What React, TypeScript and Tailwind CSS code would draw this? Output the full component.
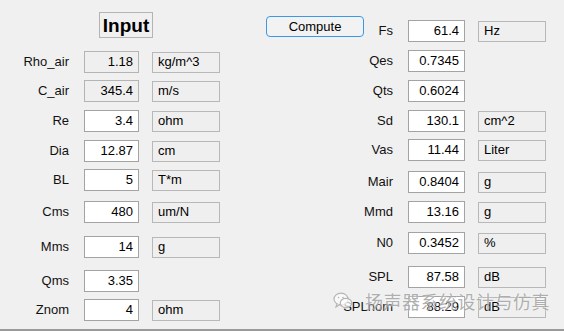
import React from "react";

// ─── Field data ───────────────────────────────────────────────────────────────

type Field = {
  label: string;
  value: string;
  unit?: string;
  disabled?: boolean;
  gap: string; // space above the row
};

const INPUTS: Field[] = [
  { label: "Rho_air", value: "1.18",  unit: "kg/m^3", disabled: true, gap: "mt-[13px]" },
  { label: "C_air",   value: "345.4", unit: "m/s",    disabled: true, gap: "mt-[7px]" },
  { label: "Re",      value: "3.4",   unit: "ohm",                    gap: "mt-[8px]" },
  { label: "Dia",     value: "12.87", unit: "cm",                     gap: "mt-[8px]" },
  { label: "BL",      value: "5",     unit: "T*m",                    gap: "mt-[7px]" },
  { label: "Cms",     value: "480",   unit: "um/N",                   gap: "mt-[10px]" },
  { label: "Mms",     value: "14",    unit: "g",                      gap: "mt-[13px]" },
  { label: "Qms",     value: "3.35",                                  gap: "mt-[12px]" },
  { label: "Znom",    value: "4",     unit: "ohm",                    gap: "mt-[7px]" },
];

const OUTPUTS: Field[] = [
  { label: "Fs",     value: "61.4",   unit: "Hz",    gap: "mt-[20px]" },
  { label: "Qes",    value: "0.7345",                gap: "mt-[8px]" },
  { label: "Qts",    value: "0.6024",                gap: "mt-[8px]" },
  { label: "Sd",     value: "130.1",  unit: "cm^2",  gap: "mt-[8px]" },
  { label: "Vas",    value: "11.44",  unit: "Liter", gap: "mt-[7px]" },
  { label: "Mair",   value: "0.8404", unit: "g",     gap: "mt-[10px]" },
  { label: "Mmd",    value: "13.16",  unit: "g",     gap: "mt-[8px]" },
  { label: "N0",     value: "0.3452", unit: "%",     gap: "mt-[9px]" },
  { label: "SPL",    value: "87.58",  unit: "dB",    gap: "mt-[12px]" },
  { label: "SPLnom", value: "88.29",  unit: "dB",    gap: "mt-[8px]" },
];

// ─── Row ──────────────────────────────────────────────────────────────────────

function Row({ f, labelW, valueW }: { f: Field; labelW: string; valueW: string }) {
  return (
    <div className={`flex items-center h-[22px] ${f.gap}`}>
      <div className={`${labelW} text-right text-[13px] text-[#111] leading-none pb-[1px]`}>{f.label}</div>
      <div
        className={`${valueW} ml-[15px] h-[22px] flex items-center justify-end pr-[5px] text-[13px] text-black border ${
          f.disabled ? "bg-[#efefef] border-[#b4b4b4]" : "bg-white border-[#a3a3a3]"
        }`}
      >
        {f.value}
      </div>
      {f.unit && (
        <div className="w-[68px] ml-[13px] h-[21px] flex items-center pl-[5px] text-[13px] text-black bg-[#efefef] border border-[#b8b8b8]">
          {f.unit}
        </div>
      )}
    </div>
  );
}

// ─── App ──────────────────────────────────────────────────────────────────────

export default function App() {
  return (
    <div
      className="relative w-[564px] h-[331px] overflow-hidden bg-[#f0f0f0] border-b-2 border-[#9a9a9a] flex"
      style={{ fontFamily: '"Liberation Sans", Arial, sans-serif' }}
    >
      {/* ── Inputs ───────────────────────────────────── */}
      <div className="w-[232px] flex flex-col">
        <div className="ml-[99px] mt-[12px] w-[54px] h-[26px] border border-[#b4b4b4] flex items-center justify-center text-[19px] font-bold text-black leading-none">
          Input
        </div>
        {INPUTS.map((f) => (
          <Row key={f.label} f={f} labelW="w-[69px]" valueW="w-[55px]" />
        ))}
      </div>

      {/* ── Compute button ───────────────────────────── */}
      <div className="ml-[34px] mt-[14px]">
        <button className="w-[98px] h-[21px] rounded-[4px] border border-[#3a98e8] bg-[#f2f2f2] text-[13px] text-black leading-none">
          Compute
        </button>
      </div>

      {/* ── Outputs ──────────────────────────────────── */}
      <div className="ml-[-31px] flex flex-col">
        {OUTPUTS.map((f) => (
          <Row key={f.label} f={f} labelW="w-[60px]" valueW="w-[57px]" />
        ))}
      </div>

      {/* ── Watermark ────────────────────────────────── */}
      <div className="absolute left-[333px] top-[292px] flex items-center gap-[12px] pointer-events-none">
        <svg width="20" height="18" viewBox="0 0 20 18" fill="none" stroke="#b5b5b5" strokeWidth="1.2">
          <ellipse cx="8" cy="7" rx="7" ry="5.8" fill="rgba(255,255,255,0.6)" />
          <path d="M4 12 L3 15 L7 12.6" fill="rgba(255,255,255,0.6)" />
          <ellipse cx="13" cy="11" rx="5.8" ry="4.6" fill="rgba(255,255,255,0.7)" />
          <circle cx="5.5" cy="5.5" r="0.8" fill="#b5b5b5" stroke="none" />
          <circle cx="10" cy="5.5" r="0.8" fill="#b5b5b5" stroke="none" />
        </svg>
        <span
          className="text-[18px] leading-none tracking-[0.5px] text-[rgba(150,150,150,0.75)]"
          style={{ fontFamily: '"Noto Sans CJK SC", sans-serif', textShadow: "0 0 2px rgba(255,255,255,0.9)" }}
        >
          扬声器系统设计与仿真
        </span>
      </div>
    </div>
  );
}
